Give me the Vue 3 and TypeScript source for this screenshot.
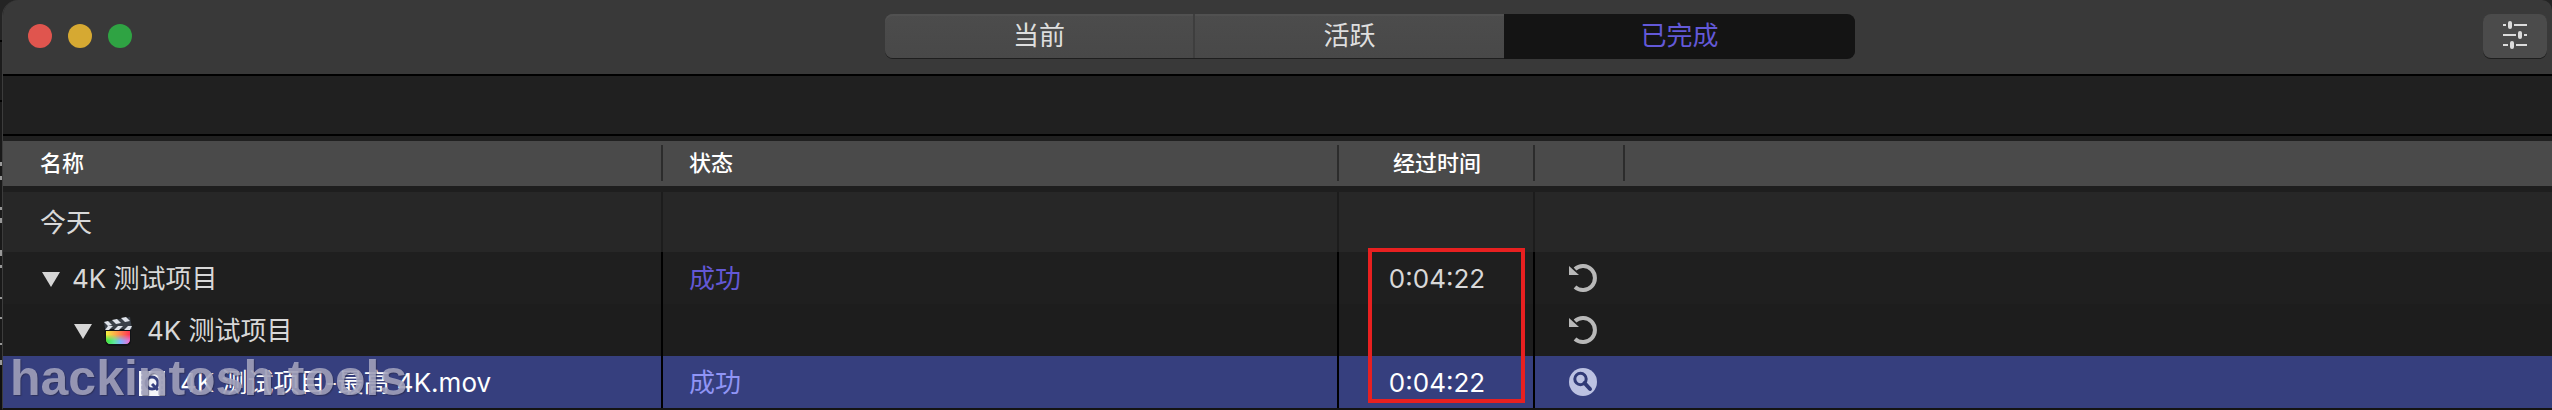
<script setup lang="ts">
import { ref } from 'vue'

interface Row {
  id: number
  kind: 'project' | 'app' | 'file'
  name: string
  status: string
  elapsed: string
}

const tabs = [
  { id: 'current', label: '当前' },
  { id: 'running', label: '活跃' },
  { id: 'done', label: '已完成' },
]
const activeTab = ref('done')
const selected = ref(3)

const rows: Row[] = [
  { id: 1, kind: 'project', name: '4K 测试项目', status: '成功', elapsed: '0:04:22' },
  { id: 2, kind: 'app', name: '4K 测试项目', status: '', elapsed: '' },
  { id: 3, kind: 'file', name: '4K 测试项目-最高 4K.mov', status: '成功', elapsed: '0:04:22' },
]
</script>

<template>
  <div class="desktop">
    <main class="window">
      <header class="titlebar">
        <div class="lights">
          <button class="light close" aria-label="关闭"></button>
          <button class="light minimize" aria-label="最小化"></button>
          <button class="light zoom" aria-label="缩放"></button>
        </div>
        <nav class="segments">
          <button
            v-for="tab in tabs"
            :key="tab.id"
            class="segment"
            :class="[tab.id, { active: activeTab === tab.id }]"
            @click="activeTab = tab.id"
          >{{ tab.label }}</button>
        </nav>
        <div class="tools">
          <button class="settings" aria-label="设置">
            <svg width="24" height="28" viewBox="0 0 24 28" fill="#dcdcdc">
              <path d="M0 3h3v2H0zM11 3h13v2H11zM0 13h13v2H0zM21 13h3v2h-3zM0 23h5v2H0zM13 23h11v2H13z" />
              <rect x="5" y="0" width="4" height="8" rx="2" />
              <rect x="15" y="10" width="4" height="8" rx="2" />
              <rect x="7" y="20" width="4" height="8" rx="2" />
            </svg>
          </button>
        </div>
      </header>
      <div class="band"></div>
      <div class="list">
        <table>
          <colgroup>
            <col class="c-name" /><col class="c-status" /><col class="c-time" /><col class="c-action" /><col />
          </colgroup>
          <thead>
            <tr>
              <th>名称</th>
              <th>状态</th>
              <th class="time">经过时间</th>
              <th></th>
              <th></th>
            </tr>
          </thead>
          <tbody>
            <tr class="group">
              <td>今天</td><td></td><td></td><td></td><td></td>
            </tr>
            <tr
              v-for="row in rows"
              :key="row.id"
              :class="[row.kind, { selected: selected === row.id }]"
              @click="selected = row.id"
            >
              <td>
                <div class="name">
                  <button v-if="row.kind !== 'file'" class="toggle" aria-label="折叠">
                    <svg width="18" height="15" viewBox="0 0 18 15"><path d="M0 0h18L9 15z" fill="#d6d6d6" /></svg>
                  </button>
                  <svg v-if="row.kind === 'app'" class="clap" width="28" height="29" viewBox="0 0 28 29">
                    <defs>
                      <linearGradient id="hueTop"><stop offset="0" stop-color="#f4f040" /><stop offset=".45" stop-color="#ffa04a" /><stop offset="1" stop-color="#ff3355" /></linearGradient>
                      <linearGradient id="hueLow"><stop offset="0" stop-color="#35e63c" /><stop offset=".35" stop-color="#5fe8a0" /><stop offset=".6" stop-color="#7cb4ff" /><stop offset="1" stop-color="#f070d8" /></linearGradient>
                      <linearGradient id="fade" x2="0" y2="1"><stop offset=".25" stop-color="#fff" stop-opacity="0" /><stop offset=".7" stop-color="#fff" /></linearGradient>
                      <mask id="low"><rect width="28" height="14" y="14" fill="url(#fade)" /></mask>
                    </defs>
                    <path d="M0 5 25 0l2 5v18q0 6-6 6H7q-6 0-6-6z" fill="#111316" />
                    <path d="M0 5 26 0l2 12H1z" fill="#3a4048" />
                    <path d="M2 14h24v8q0 5-5 5H7q-5 0-5-5z" fill="url(#hueTop)" />
                    <path d="M2 14h24v8q0 5-5 5H7q-5 0-5-5z" fill="url(#hueLow)" mask="url(#low)" />
                    <path d="M0 5l4-1 4 4-4 1zM8 3l5-1 4 4-5 1zM17 1l5-1 4 4-5 1zM1 13l3-4h5l-4 4zM10 13l4-4h5l-4 4zM20 13l4-4h4l-2 4z" fill="#dfe3ea" />
                  </svg>
                  <svg v-if="row.kind === 'file'" class="movie" width="26" height="25" viewBox="0 0 26 25">
                    <rect width="26" height="25" fill="#f4f5fa" />
                    <path d="M3 0v25M23 0v25" stroke="#8088b4" stroke-width="1" stroke-dasharray="3 2" />
                    <circle cx="13" cy="12" r="6" fill="none" stroke="#36407f" stroke-width="3" />
                    <path d="m13 13 6 6" stroke="#36407f" stroke-width="3" />
                  </svg>
                  <span>{{ row.name }}</span>
                </div>
              </td>
              <td class="status">{{ row.status }}</td>
              <td class="time">{{ row.elapsed }}</td>
              <td class="action">
                <button v-if="row.kind !== 'file'" class="icon" aria-label="重新提交">
                  <svg width="28" height="28" viewBox="0 0 28 28">
                    <path d="M6 5A12 12 0 1 1 6 23" fill="none" stroke="#b8b8b8" stroke-width="4" />
                    <path d="M0 2v9h10z" fill="#b8b8b8" />
                  </svg>
                </button>
                <button v-else class="icon" aria-label="在访达中显示">
                  <svg width="28" height="28" viewBox="0 0 28 28">
                    <circle cx="14" cy="14" r="14" fill="#bcc2e2" />
                    <circle cx="11.5" cy="11" r="5.7" fill="none" stroke="#303a76" stroke-width="3" />
                    <path d="m15.5 15 5.5 6" stroke="#303a76" stroke-width="4" stroke-linecap="round" />
                  </svg>
                </button>
              </td>
              <td></td>
            </tr>
          </tbody>
        </table>
        <div class="highlight"></div>
        <div class="watermark">hackintosh.tools</div>
      </div>
    </main>
  </div>
</template>

<style>
body { background: #000; }
</style>

<style scoped>
.desktop {
  padding-left: 2px;
  background: linear-gradient(
    #242424 40px, #000 40px 42px, #1c1c1c 42px 100px, #000 100px 102px,
    #191919 102px 162px, #999 162px 166px, #191919 166px 176px, #999 176px 180px,
    #191919 180px 207px, #999 207px 210px, #191919 210px 218px, #999 218px 223px,
    #191919 223px 250px, #999 250px 256px, #191919 256px 265px, #999 265px 268px,
    #191919 268px 297px, #999 297px 299px, #191919 299px 317px, #999 317px 319px,
    #191919 319px 343px, #999 343px 345px, #191919 345px 360px, #999 360px 365px,
    #101010 365px
  );
  font-family: Inter, "Noto Sans CJK SC", sans-serif;
  color: #d8d8d8;
}
.window {
  border-left: 1px solid #3c3c3c;
  border-bottom: 2px solid #141414;
  border-radius: 16px 10px 0 0;
  overflow: hidden;
  background: #202020;
}
button {
  padding: 0;
  border: 0;
  background: none;
  font: inherit;
  color: inherit;
}
svg { display: block; }
.titlebar {
  display: grid;
  grid-template-columns: minmax(0, 882fr) auto minmax(0, 697fr);
  align-items: start;
  height: 60px;
  padding-top: 14px;
  background: #393939;
  border-bottom: 2px solid #000;
}
.lights {
  display: flex;
  gap: 16px;
  padding: 10px 0 0 25px;
}
.light {
  width: 24px;
  height: 24px;
  border-radius: 50%;
}
.close { background: #e0554e; }
.minimize { background: #d6a932; }
.zoom { background: #2fa343; }
.segments { display: flex; }
.segment {
  width: 309px;
  height: 44px;
  background: linear-gradient(#4c4c4c, #484848);
  box-shadow: inset 0 2px #515151, 0 1px #1e1e1e;
  font-size: 26px;
  line-height: 42px;
  color: #dedede;
}
.segment.current {
  width: 310px;
  border-right: 2px solid #3e3e3e;
  border-radius: 8px 0 0 8px;
}
.segment.done {
  width: 351px;
  border-radius: 0 8px 8px 0;
}
.segment.active {
  background: #141414;
  box-shadow: 0 1px #141414;
  color: #6359d8;
}
.tools {
  display: flex;
  justify-content: flex-end;
  padding-right: 5px;
}
.settings {
  display: grid;
  place-items: center;
  width: 64px;
  height: 44px;
  padding-bottom: 2px;
  border-radius: 8px;
  background: #4b4b4b;
  box-shadow: 0 1px #1e1e1e;
}
.band {
  height: 58px;
  border-bottom: 2px solid #000;
  background: #202020;
}
.list {
  position: relative;
  padding-top: 5px;
}
table {
  width: 100%;
  table-layout: fixed;
  border-collapse: collapse;
}
.c-name { width: 660px; }
.c-status { width: 676px; }
.c-time { width: 196px; }
.c-action { width: 90px; }
th, td {
  box-sizing: border-box;
  padding: 2px 0 0 26px;
  text-align: left;
  font-size: 26px;
  font-weight: 400;
  white-space: nowrap;
}
th {
  height: 45px;
  padding: 0 0 2px 26px;
  background: linear-gradient(#2c2c2c, #2c2c2c) right 0 top 4px / 2px 36px no-repeat #4a4a4a;
  font-size: 22px;
  font-weight: 500;
  line-height: 32px;
  color: #fff;
}
th:last-child { background-image: none; }
th:first-child, td:first-child { padding-left: 37px; }
th.time { padding: 0 0 2px; }
td.time { padding: 2px 0 0; }
th.time, td.time { text-align: center; }
td {
  height: 52px;
  background: linear-gradient(#000, #000) right / 2px 100% no-repeat #1d1d1d;
  line-height: 40px;
}
td:nth-child(n + 4) { background-image: none; }
.project td { background-color: #1f1f1f; }
.group td {
  height: 66px;
  padding-top: 8px;
  background-color: #272727;
  background-image: linear-gradient(#1c1c1c, #1c1c1c);
  box-shadow: inset 0 6px #1e1e1e;
}
.group td:nth-child(n + 4) { background-image: none; }
.selected td {
  background-color: #363f7e;
  color: #fff;
}
.name {
  display: flex;
  align-items: center;
}
.toggle { margin: 0 12px 0 2px; }
.app .name { padding-left: 32px; }
.clap { margin-right: 15px; }
.file .name { padding-left: 99px; }
.movie { margin-right: 15px; }
td.status { color: #6358d6; }
.selected td.status { color: #9095f5; }
td.action { padding: 0 0 0 34px; }
.icon { display: block; }
.highlight {
  position: absolute;
  left: 1365px;
  bottom: 5px;
  width: 149px;
  height: 147px;
  border: 4px solid #e82020;
}
.watermark {
  position: absolute;
  left: 7px;
  bottom: 2px;
  font: bold 50px/56px "Liberation Sans", sans-serif;
  color: rgba(178, 178, 202, 0.78);
  text-shadow: 1px 1px 1px rgba(40, 40, 70, 0.6);
}
</style>
